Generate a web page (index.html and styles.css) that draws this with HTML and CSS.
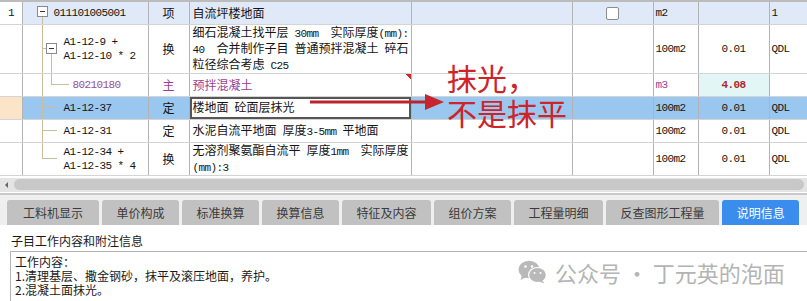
FILE: index.html
```html
<!DOCTYPE html>
<html lang="zh-CN">
<head>
  <meta charset="UTF-8">
  <title>说明信息</title>
  <link rel="stylesheet" href="styles.css">
</head>
<body>
  <div class="grid">
    <table>
      <colgroup>
        <col class="c-no"><col class="c-code"><col class="c-type"><col class="c-name"><col class="c-spec">
        <col class="c-chk"><col class="c-unit"><col class="c-qty"><col class="c-src">
      </colgroup>
      <tr class="row-item">
        <td class="no">1</td>
        <td class="code t-root"><span class="fold"></span>011101005001</td>
        <td class="type">项</td>
        <td class="name">自流坪楼地面</td>
        <td></td>
        <td class="chk"><span class="box"></span></td>
        <td class="unit">m2</td>
        <td class="qty"></td>
        <td class="src">1</td>
      </tr>
      <tr class="row-tall">
        <td class="no"></td>
        <td class="code t-parent"><div class="cwrap"><span class="fold"></span><span>A1-12-9 +<br>A1-12-10 * 2</span></div></td>
        <td class="type">换</td>
        <td class="name">细石混凝土找平层<span class="en"> 30mm  </span>实际厚度<span class="en">(mm):</span><br><span class="en">40  </span>合并制作子目<span class="en"> </span>普通预拌混凝土<span class="en"> </span>碎石<br>粒径综合考虑<span class="en"> C25</span></td>
        <td></td>
        <td></td>
        <td class="unit">100m2</td>
        <td class="qty">0.01</td>
        <td class="src">QDL</td>
      </tr>
      <tr class="row-main">
        <td class="no"></td>
        <td class="code t-child">80210180</td>
        <td class="type">主</td>
        <td class="name note-mark">预拌混凝土</td>
        <td></td>
        <td></td>
        <td class="unit">m3</td>
        <td class="qty qty-hl">4.08</td>
        <td class="src"></td>
      </tr>
      <tr class="row-sel">
        <td class="no cur"></td>
        <td class="code t-leaf">A1-12-37</td>
        <td class="type">定</td>
        <td class="name editing">楼地面<span class="en"> </span>砼面层抹光</td>
        <td></td>
        <td></td>
        <td class="unit">100m2</td>
        <td class="qty">0.01</td>
        <td class="src">QDL</td>
      </tr>
      <tr>
        <td class="no"></td>
        <td class="code t-leaf">A1-12-31</td>
        <td class="type">定</td>
        <td class="name">水泥自流平地面<span class="en"> </span>厚度<span class="en">3-5mm </span>平地面</td>
        <td></td>
        <td></td>
        <td class="unit">100m2</td>
        <td class="qty">0.01</td>
        <td class="src">QDL</td>
      </tr>
      <tr class="row-two">
        <td class="no"></td>
        <td class="code t-last">A1-12-34 +<br>A1-12-35 * 4</td>
        <td class="type">换</td>
        <td class="name">无溶剂聚氨酯自流平<span class="en"> </span>厚度<span class="en">1mm  </span>实际厚度<br><span class="en">(mm):3</span></td>
        <td></td>
        <td></td>
        <td class="unit">100m2</td>
        <td class="qty">0.01</td>
        <td class="src">QDL</td>
      </tr>
    </table>
  </div>

  <div class="hscroll"><span class="arrow-left"></span><div class="thumb"></div></div>

  <div class="tabbar">
    <div class="tab first">工料机显示</div>
    <div class="tab">单价构成</div>
    <div class="tab">标准换算</div>
    <div class="tab">换算信息</div>
    <div class="tab">特征及内容</div>
    <div class="tab">组价方案</div>
    <div class="tab">工程量明细</div>
    <div class="tab">反查图形工程量</div>
    <div class="tab active">说明信息</div>
  </div>

  <div class="info-head">子目工作内容和附注信息</div>
  <div class="info-box">
    工作内容：<br>
    1.清理基层、撒金钢砂，抹平及滚压地面，养护。<br>
    2.混凝土面抹光。
  </div>

  <!-- 标注 -->
  <svg class="pointer" width="136" height="18" viewBox="0 0 136 18">
    <line x1="0" y1="9" x2="120" y2="9" stroke="#bf232b" stroke-width="3"/>
    <polygon points="115,1 134,9 115,17" fill="#c8242b"/>
  </svg>
  <div class="remark">抹光，<br>不是抹平</div>

  <div class="watermark">
    <svg width="30" height="24" viewBox="0 0 30 24">
      <ellipse cx="11" cy="9.5" rx="10.5" ry="8.8" fill="#b9b9b9"/>
      <path d="M4 15 L2.5 20 L8.5 17 Z" fill="#b9b9b9"/>
      <ellipse cx="19.5" cy="15" rx="9.5" ry="8" fill="#fff"/>
      <ellipse cx="19.5" cy="15" rx="8.3" ry="6.9" fill="#b9b9b9"/>
      <path d="M24 20 L26.5 23.5 L21 21.5 Z" fill="#b9b9b9"/>
      <circle cx="7.5" cy="6.5" r="1.3" fill="#fff"/>
      <circle cx="14" cy="6.5" r="1.3" fill="#fff"/>
      <circle cx="16.5" cy="13" r="1" fill="#fff"/>
      <circle cx="22.5" cy="13" r="1" fill="#fff"/>
    </svg>
    <span>公众号 · 丁元英的泡面</span>
  </div>
</body>
</html>
```

FILE: styles.css
```css
body {
  margin: 0;
  width: 807px;
  height: 301px;
  overflow: hidden;
  position: relative;
  background: #fff;
  color: #141414;
  font-family: "Noto Sans CJK SC", "Liberation Sans", sans-serif;
  font-size: 12px;
}

/* 表格 */
.grid {
  border-top: 2px solid #bcbcbc;
}
.grid table {
  width: 807px;
  border-collapse: collapse;
  table-layout: fixed;
}
.c-no { width: 22px; }
.c-code { width: 126px; }
.c-type { width: 41px; }
.c-name { width: 222px; }
.c-spec { width: 161px; }
.c-chk { width: 81px; }
.c-unit { width: 45px; }
.c-qty { width: 71px; }
.c-src { width: 38px; }

.grid tr {
  height: 23px;
}
.grid tr.row-item {
  height: 22px;
  background: #dfe9f7;
}
.grid tr.row-tall {
  height: 47px;
}
.grid tr.row-two {
  height: 33px;
}
.grid tr.row-sel {
  background: #9ac7ef;
}
.grid td {
  padding: 0 0 0 3px;
  border-right: 1px solid #b3b3b3;
  border-bottom: 1px solid #d4d4d4;
  line-height: 14px;
  vertical-align: middle;
  white-space: nowrap;
  overflow: hidden;
}
.grid td:last-child {
  border-right: none;
}
.grid td.no {
  background: #fff;
  padding-left: 8px;
}
.grid td.no.cur {
  background: #fbe4c8;
}

/* 半角字符按宋体宽度 */
.no, .code, .unit, .qty, .src, .en {
  font-family: "Liberation Mono", "Noto Sans CJK SC", monospace;
  font-size: 11px;
  letter-spacing: -0.6px;
}
.en {
  white-space: pre;
}
.type {
  text-align: center;
  padding-left: 0 !important;
}
.unit {
  padding-left: 2px !important;
}
.qty {
  text-align: center;
  padding-left: 0 !important;
}
.src {
  padding-left: 2px !important;
}
.chk {
  text-align: center;
  padding-left: 0 !important;
}
.chk .box {
  display: inline-block;
  width: 11px;
  height: 11px;
  border: 1px solid #8c8c8c;
  border-radius: 2px;
  background: #fff;
  vertical-align: middle;
}

/* 树形线 */
.fold {
  display: inline-block;
  width: 9px;
  height: 9px;
  border: 1px solid #8a8a8a;
  background: linear-gradient(#333, #333) center / 5px 1px no-repeat, #fff;
  vertical-align: middle;
  flex-shrink: 0;
}
.code.t-root {
  padding-left: 14px;
  background: linear-gradient(#c9bd9e, #c9bd9e) 19px 100% / 1px 50% no-repeat;
}
.code.t-root .fold {
  margin: -2px 6px 0 0;
}
.code.t-parent {
  padding-left: 23px;
  background:
    linear-gradient(#c9bd9e, #c9bd9e) 19px 0 / 1px 100% no-repeat,
    linear-gradient(#c9bd9e, #c9bd9e) 19px 50% / 5px 1px no-repeat,
    linear-gradient(#c9bd9e, #c9bd9e) 28px 100% / 1px 50% no-repeat;
}
.cwrap {
  display: flex;
  align-items: center;
}
.cwrap .fold {
  margin-right: 7px;
}
.code.t-child {
  padding-left: 50px;
  color: #9a4d96;
  background:
    linear-gradient(#c9bd9e, #c9bd9e) 19px 0 / 1px 100% no-repeat,
    linear-gradient(#c9bd9e, #c9bd9e) 28px 0 / 1px 50% no-repeat,
    linear-gradient(#c9bd9e, #c9bd9e) 28px 50% / 18px 1px no-repeat;
}
.code.t-leaf {
  padding-left: 41px;
  background:
    linear-gradient(#c9bd9e, #c9bd9e) 19px 0 / 1px 100% no-repeat,
    linear-gradient(#c9bd9e, #c9bd9e) 19px 50% / 15px 1px no-repeat;
}
.code.t-last {
  padding-left: 41px;
  background:
    linear-gradient(#c9bd9e, #c9bd9e) 19px 0 / 1px 50% no-repeat,
    linear-gradient(#c9bd9e, #c9bd9e) 19px 50% / 15px 1px no-repeat;
}

.row-main .type,
.row-main .name,
.row-main .unit {
  color: #9a3f94;
}
.note-mark {
  background: linear-gradient(225deg, #d4252b 4px, transparent 4px) right top / 8px 8px no-repeat;
}
.qty-hl {
  background: #e2f6f6;
  color: #b3242a;
  font-weight: bold;
}
.name.editing {
  background: #fff;
  box-shadow: inset 0 0 0 2px #565656;
}

/* 滚动条 */
.hscroll {
  display: flex;
  align-items: center;
  height: 14px;
  margin-top: 2px;
  background: #e4e4e4;
}
.arrow-left {
  width: 0;
  height: 0;
  margin: 0 6px 0 5px;
  border-right: 3px solid #666;
  border-top: 3px solid transparent;
  border-bottom: 3px solid transparent;
}
.thumb {
  flex: 1;
  height: 11px;
  margin-right: 3px;
  border-radius: 6px;
  background: #c8c8c8;
}

/* 页签 */
.tabbar {
  display: flex;
  gap: 3px;
  margin-top: 1px;
  padding: 5px 0 0 7px;
  border-top: 2px solid #c9c9c9;
  background: #efefef;
}
.tab {
  height: 25px;
  line-height: 25px;
  padding: 0 14.5px;
  border-radius: 3px 3px 0 0;
  background: #c1c1c1;
  color: #3a3a3a;
}
.tab.first {
  padding: 0 16px;
}
.tab.active {
  background: #3b8ded;
  color: #fff;
}

.info-head {
  padding: 6px 0 0 11px;
  height: 20px;
  line-height: 20px;
  color: #1a1a1a;
}
.info-box {
  margin-left: 10px;
  padding: 3px 0 0 4px;
  height: 60px;
  border-top: 1px solid #b3b3b3;
  border-left: 1px solid #b3b3b3;
  line-height: 14px;
  color: #1a1a1a;
}

/* 叠加层 */
.pointer {
  position: absolute;
  left: 310px;
  top: 93px;
}
.remark {
  position: absolute;
  left: 447px;
  top: 60px;
  font-size: 30px;
  line-height: 35px;
  color: #cd232b;
}
.watermark {
  position: absolute;
  left: 518px;
  top: 256px;
  display: flex;
  align-items: center;
  gap: 7px;
  font-size: 22px;
  color: #b4b4b4;
}
```
